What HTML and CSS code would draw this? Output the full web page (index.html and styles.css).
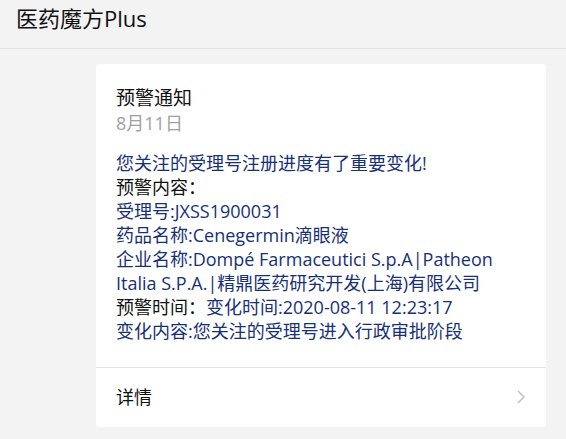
FILE: index.html
```html
<!DOCTYPE html>
<html lang="zh-CN">
<head>
<meta charset="utf-8">
<title>医药魔方Plus</title>
<link rel="stylesheet" href="styles.css">
</head>
<body>
<header class="topbar">医药魔方Plus</header>
<main class="page">
  <section class="card">
    <div class="card-body">
      <div class="title">预警通知</div>
      <div class="date">8月11日</div>
      <div class="content">
        <div class="blue">您关注的受理号注册进度有了重要变化!</div>
        <div class="black">预警内容：</div>
        <div class="blue">受理号:JXSS1900031</div>
        <div class="blue">药品名称:Cenegermin滴眼液</div>
        <div class="blue">企业名称:Dompé Farmaceutici S.p.A|Patheon Italia S.P.A.|精鼎医药研究开发(上海)有限公司</div>
        <div><span class="black">预警时间：</span><span class="blue">变化时间:2020-08-11 12:23:17</span></div>
        <div class="blue">变化内容:您关注的受理号进入行政审批阶段</div>
      </div>
    </div>
    <div class="card-footer">
      <span class="more">详情</span>
      <svg class="chevron" width="10" height="16" viewBox="0 0 10 16"><path d="M2 2 L8 8 L2 14" fill="none" stroke="#c4c4c4" stroke-width="1.6"/></svg>
    </div>
  </section>
</main>
</body>
</html>
```

FILE: styles.css
```css
html, body {
  margin: 0;
  padding: 0;
  background: #f3f3f3;
  font-family: "Open Sans", "Noto Sans CJK SC", sans-serif;
  color: #111;
}

.topbar {
  height: 48px;
  border-bottom: 1px solid #e2e2e2;
  padding-left: 16px;
  font-size: 22px;
  line-height: 36px;
  color: #111;
}

.page {
  padding: 15px 0 0 96px;
}

.card {
  width: 450px;
  background: #fff;
  border-radius: 3px;
}

.card-body {
  padding: 22px 20px 24px;
}

.title {
  font-size: 19px;
  line-height: 24px;
  color: #111;
}

.date {
  font-size: 18px;
  line-height: 26px;
  color: #a0a0a0;
}

.content {
  margin-top: 15px;
  font-size: 18px;
  line-height: 24px;
}

.blue {
  color: #173177;
}

.black {
  color: #111;
}

.card-footer {
  border-top: 1px solid #e6e6e6;
  height: 59px;
  padding: 0 20px;
  display: flex;
  align-items: center;
  justify-content: space-between;
}

.more {
  font-size: 18px;
  line-height: 24px;
  color: #111;
  margin-top: -2px;
}

.chevron {
  margin-top: -2px;
}
```
